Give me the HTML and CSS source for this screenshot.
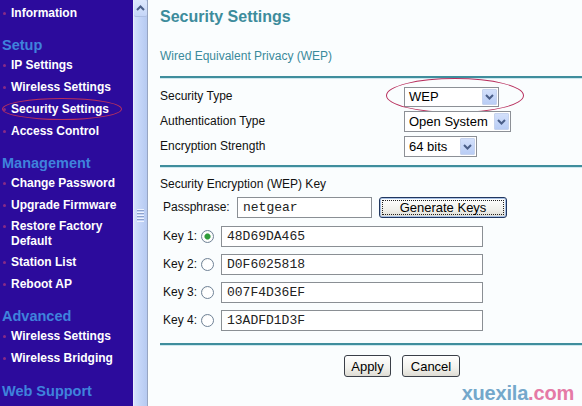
FILE: index.html
```html
<!DOCTYPE html>
<html>
<head>
<meta charset="utf-8">
<title>Security Settings</title>
<link rel="stylesheet" href="styles.css">
</head>
<body>
<div class="frame">
  <nav class="sidebar">
    <ul class="nav-list">
      <li>Information</li>
    </ul>
    <h3 class="nav-head">Setup</h3>
    <ul class="nav-list">
      <li>IP Settings</li>
      <li>Wireless Settings</li>
      <li class="circled">Security Settings</li>
      <li>Access Control</li>
    </ul>
    <h3 class="nav-head">Management</h3>
    <ul class="nav-list">
      <li>Change Password</li>
      <li>Upgrade Firmware</li>
      <li class="multi">Restore Factory<br>Default</li>
      <li>Station List</li>
      <li>Reboot AP</li>
    </ul>
    <h3 class="nav-head">Advanced</h3>
    <ul class="nav-list">
      <li>Wireless Settings</li>
      <li>Wireless Bridging</li>
    </ul>
    <h3 class="nav-head nav-last">Web Support</h3>
  </nav>

  <div class="scrollbar">
    <div class="sb-up">
      <svg width="9" height="6" viewBox="0 0 9 6"><path d="M1 5 L4.5 1.5 L8 5" fill="none" stroke="#4a5e88" stroke-width="2"/></svg>
    </div>
    <div class="sb-thumb"><div class="grip"></div></div>
  </div>

  <main class="content">
    <h1 class="title">Security Settings</h1>
    <p class="subtitle">Wired Equivalent Privacy (WEP)</p>
    <hr class="rule rule-1">

    <div class="form-grid">
      <span class="label">Security Type</span>
      <div class="select sel-wep circled-sel">WEP<span class="arrow"><svg width="9" height="6" viewBox="0 0 9 6"><path d="M1 1 L4.5 4.5 L8 1" fill="none" stroke="#4a5e88" stroke-width="2"/></svg></span></div>
      <span class="label">Authentication Type</span>
      <div class="select sel-open">Open System<span class="arrow"><svg width="9" height="6" viewBox="0 0 9 6"><path d="M1 1 L4.5 4.5 L8 1" fill="none" stroke="#4a5e88" stroke-width="2"/></svg></span></div>
      <span class="label">Encryption Strength</span>
      <div class="select sel-bits">64 bits<span class="arrow"><svg width="9" height="6" viewBox="0 0 9 6"><path d="M1 1 L4.5 4.5 L8 1" fill="none" stroke="#4a5e88" stroke-width="2"/></svg></span></div>
    </div>

    <hr class="rule rule-2">

    <p class="section-label">Security Encryption (WEP) Key</p>
    <div class="pass-row">
      <span class="label pass-label">Passphrase:</span>
      <div class="input pass-input">netgear</div>
      <button class="btn btn-focus"><span class="focus-ring">Generate Keys</span></button>
    </div>

    <div class="keys">
      <div class="key-row"><span class="label key-label">Key 1:</span><span class="radio checked"></span><div class="input key-input">48D69DA465</div></div>
      <div class="key-row"><span class="label key-label">Key 2:</span><span class="radio"></span><div class="input key-input">D0F6025818</div></div>
      <div class="key-row"><span class="label key-label">Key 3:</span><span class="radio"></span><div class="input key-input">007F4D36EF</div></div>
      <div class="key-row"><span class="label key-label">Key 4:</span><span class="radio"></span><div class="input key-input">13ADFD1D3F</div></div>
    </div>

    <hr class="rule rule-3">

    <div class="actions">
      <button class="btn btn-apply">Apply</button>
      <button class="btn btn-cancel">Cancel</button>
    </div>

    <div class="watermark">xuexila<span class="wm-com">.com</span></div>
  </main>
</div>
</body>
</html>
```

FILE: styles.css
```css
html, body {
  margin: 0;
  padding: 0;
  height: 406px;
  overflow: hidden;
}

body {
  font-family: "Liberation Sans", Arial, sans-serif;
  font-size: 12px;
  color: #111;
}

.frame {
  display: flex;
  height: 406px;
}

/* ---------- Sidebar ---------- */
.sidebar {
  width: 133px;
  flex: 0 0 133px;
  background: #2c0b9c;
  padding-top: 4px;
  box-sizing: border-box;
}

.nav-list {
  list-style: none;
  margin: 0;
  padding: 0;
  display: flex;
  flex-direction: column;
  gap: 4px;
}

.nav-list li {
  position: relative;
  display: flex;
  align-items: center;
  min-height: 18px;
  line-height: 15px;
  color: #ffffff;
  font-weight: bold;
  font-size: 12px;
}

.nav-list li::before {
  content: "";
  width: 3px;
  height: 3px;
  border-radius: 50%;
  background: #8a2a86;
  margin: 0 5px 0 3px;
  flex: 0 0 3px;
}

.nav-list li.multi {
  align-items: flex-start;
  padding-top: 1px;
}

.nav-list li.multi::before {
  margin-top: 6px;
}

.nav-list li.circled::after {
  content: "";
  position: absolute;
  left: 2px;
  top: -2px;
  width: 120px;
  height: 22px;
  border: 1px solid #b8305e;
  border-radius: 50%;
  box-sizing: border-box;
}

.nav-head {
  margin: 14px 0 2px;
  padding-left: 2px;
  height: 18px;
  line-height: 18px;
  font-size: 14.5px;
  font-weight: bold;
  color: #3f83dc;
}

.nav-last {
  margin-top: 15px;
}

/* ---------- Scrollbar ---------- */
.scrollbar {
  width: 13px;
  flex: 0 0 13px;
  border-left: 1px solid #e9eefc;
  border-right: 1px solid #97a5c2;
  background: linear-gradient(to right, #d6e2fb, #c4d5f8 45%, #b6caf1);
  display: flex;
  flex-direction: column;
}

.sb-up {
  height: 16px;
  display: flex;
  align-items: center;
  justify-content: center;
  background: linear-gradient(#dde8fd, #c5d6f8);
  border-bottom: 1px solid #aebfe3;
  border-radius: 2px;
}

.sb-thumb {
  flex: 1;
  display: flex;
  align-items: center;
  justify-content: center;
  padding-top: 8px;
}

.grip {
  width: 7px;
  height: 13px;
  background: repeating-linear-gradient(#eef3fe 0 1px, #8ea3cc 1px 2px, #c4d5f8 2px 3px);
}

/* ---------- Content ---------- */
.content {
  position: relative;
  flex: 1;
  background: #fafdfe;
  padding: 7px 0 0 12px;
  box-sizing: border-box;
}

.title {
  margin: 0;
  font-size: 16px;
  line-height: 20px;
  font-weight: bold;
  color: #3d8c9c;
}

.subtitle {
  margin: 22px 0 0;
  line-height: 15px;
  font-size: 12px;
  color: #3b8a9b;
}

.rule {
  height: 0;
  margin: 0;
  border: 0;
  border-top: 2px solid #3f8e9d;
  border-bottom: 1px solid #cde8ef;
}

.rule-1 { margin-top: 12px; }
.rule-2 { margin-top: 8px; }
.rule-3 { margin-top: 12px; }

.form-grid {
  margin-top: 7px;
  display: grid;
  grid-template-columns: 244px auto;
  grid-auto-rows: 21px;
  row-gap: 4px;
  align-items: center;
  justify-items: start;
}

.label {
  font-size: 12px;
  line-height: 15px;
  color: #111;
}

.select {
  position: relative;
  height: 21px;
  box-sizing: border-box;
  border: 1px solid #8c9096;
  background: #fff;
  display: flex;
  align-items: center;
  justify-content: space-between;
  padding: 1px 1px 1px 4px;
  font-size: 13px;
  color: #000;
}

.sel-wep { width: 95px; height: 20px; }
.sel-open { width: 107px; }
.sel-bits { width: 73px; }

.arrow {
  width: 15px;
  align-self: stretch;
  display: flex;
  align-items: center;
  justify-content: center;
  background: linear-gradient(#d3e0fb, #b9cdf5);
  border: 1px solid #c6d3ee;
  box-sizing: border-box;
  border-radius: 1px;
}

.circled-sel::after {
  content: "";
  position: absolute;
  left: -19px;
  top: -10px;
  width: 138px;
  height: 35px;
  border: 1px solid #b8305e;
  border-radius: 50%;
  box-sizing: border-box;
}

.section-label {
  margin: 9px 0 0;
  line-height: 15px;
  font-size: 12px;
  color: #111;
}

.pass-row {
  margin-top: 5px;
  display: flex;
  align-items: center;
  height: 21px;
  padding-left: 3px;
}

.pass-label {
  width: 74px;
}

.input {
  height: 21px;
  box-sizing: border-box;
  border: 1px solid #8a8f94;
  background: #fff;
  font-family: "Liberation Mono", "Courier New", monospace;
  font-size: 13px;
  line-height: 19px;
  padding-left: 5px;
  color: #222;
}

.pass-input {
  width: 135px;
}

.btn {
  font-family: "Liberation Sans", Arial, sans-serif;
  font-size: 13px;
  color: #000;
  height: 22px;
  box-sizing: border-box;
  border: 1px solid #3a3f48;
  border-radius: 3px;
  background: linear-gradient(#ffffff, #f1f1ec 60%, #dedcd4);
  padding: 0;
  cursor: default;
}

.btn-focus {
  margin-left: 7px;
  width: 128px;
  height: 21px;
  border: 1px solid #21375f;
  box-shadow: inset 0 0 0 1px #a9c2e6;
  padding: 2px;
  display: flex;
}

.focus-ring {
  flex: 1;
  border: 1px dotted #222;
  display: flex;
  align-items: center;
  justify-content: center;
  line-height: 13px;
}

.keys {
  margin-top: 8px;
  display: flex;
  flex-direction: column;
  gap: 7px;
}

.key-row {
  display: flex;
  align-items: center;
  height: 21px;
  padding-left: 3px;
}

.key-label {
  width: 38px;
}

.radio {
  width: 11px;
  height: 11px;
  border-radius: 50%;
  border: 1px solid #6f8296;
  background: radial-gradient(circle at 60% 60%, #ffffff 0 55%, #e3e5e0 100%);
  margin-right: 7px;
}

.radio.checked {
  background: radial-gradient(circle, #2f9c3a 0 2.4px, #8cc890 3px, #ffffff 3.6px, #f1f2ee 100%);
}

.key-input {
  width: 262px;
}

.actions {
  margin-top: 9px;
  padding-left: 184px;
  display: flex;
  gap: 11px;
}

.btn-apply { width: 47px; }
.btn-cancel { width: 58px; }

.watermark {
  position: absolute;
  right: 8px;
  top: 383px;
  font-size: 20px;
  line-height: 20px;
  font-weight: bold;
  color: #74a8cb;
  letter-spacing: -0.2px;
}

.wm-com {
  color: #e57aa6;
}
```
